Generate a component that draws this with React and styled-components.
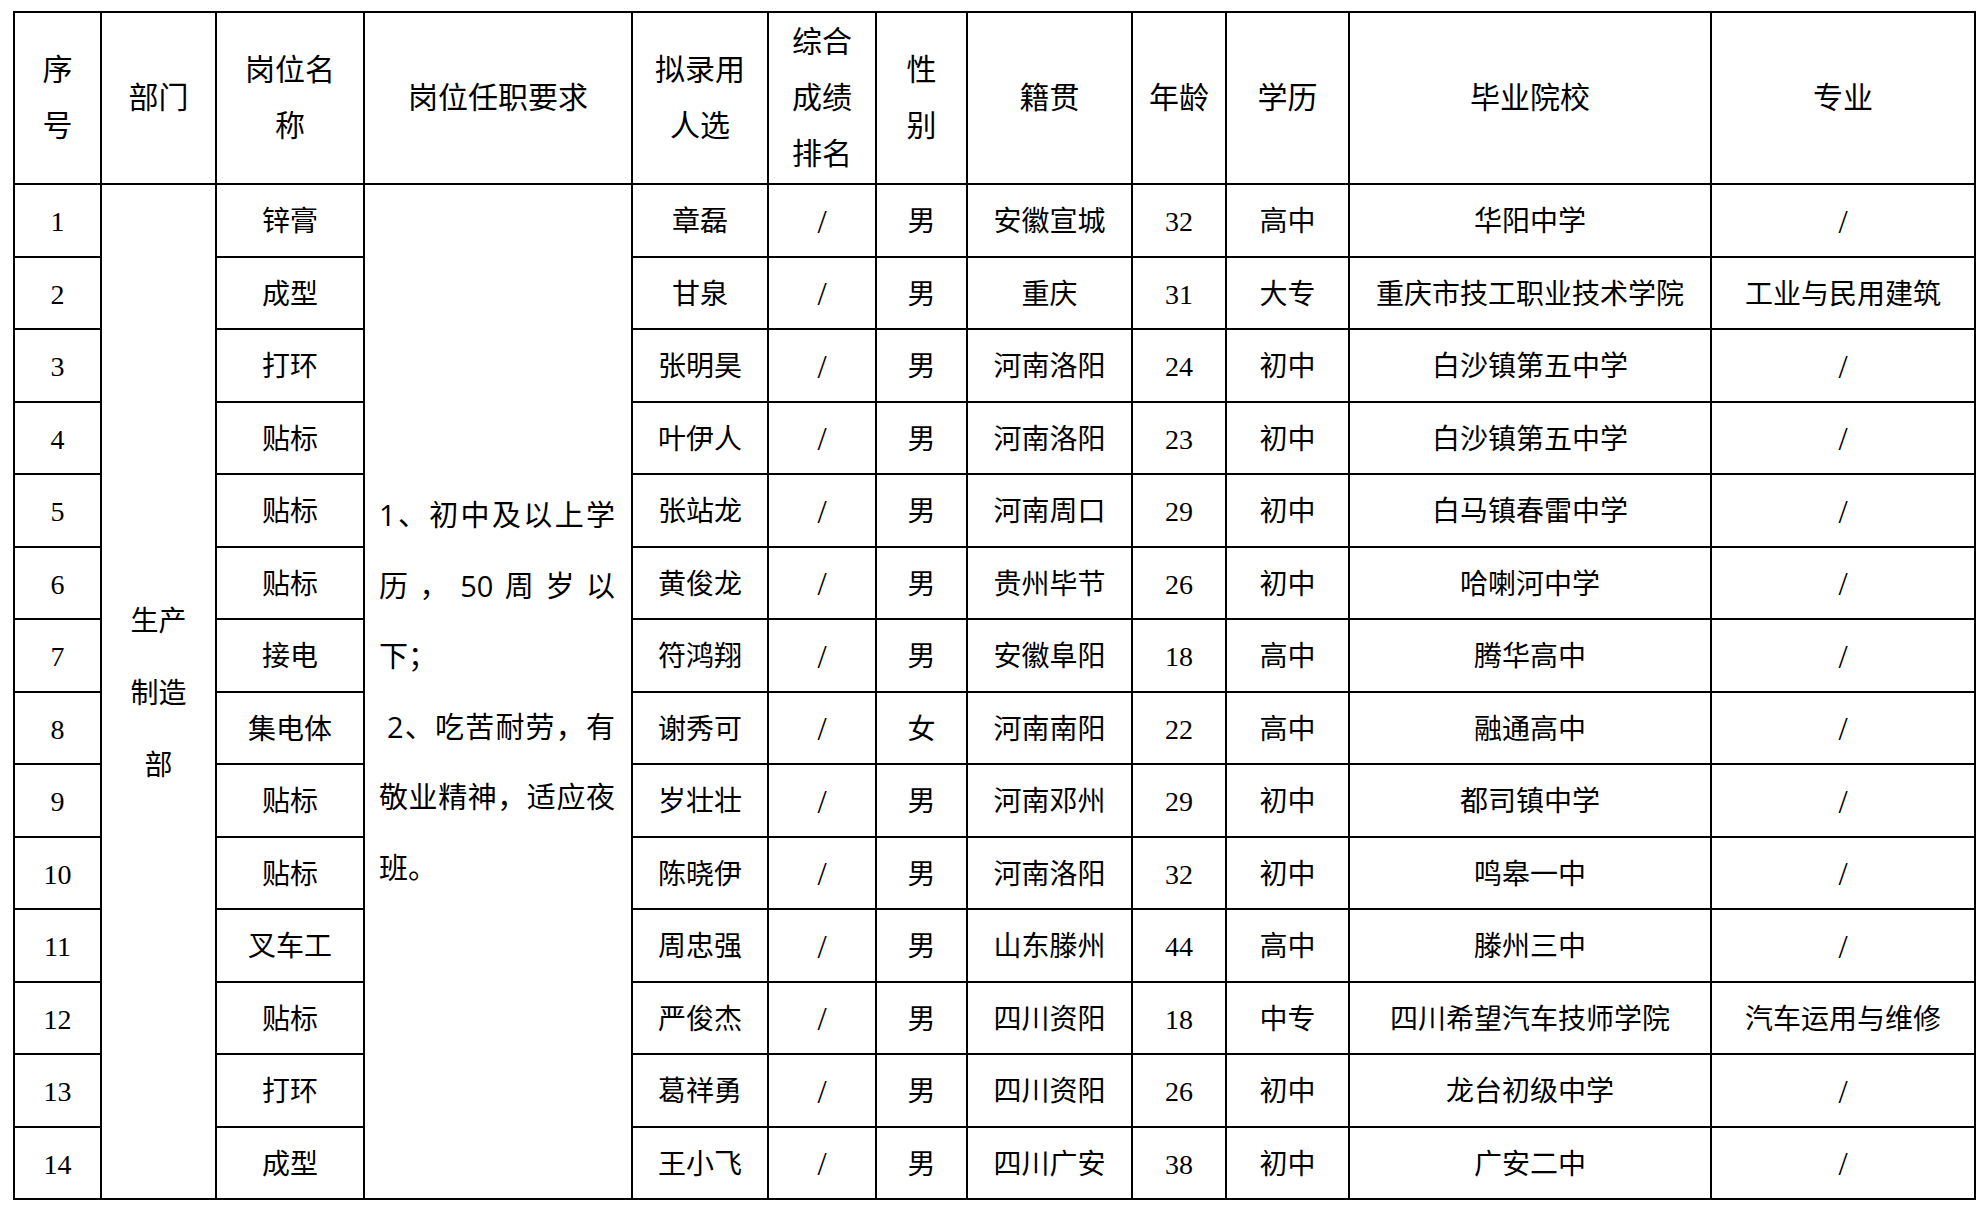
import React from "react";
import styled, { createGlobalStyle } from "styled-components";

const GlobalStyle = createGlobalStyle`
  html, body {
    margin: 0;
    padding: 0;
    background: #fff;
  }
  body {
    font-family: "Liberation Serif", "Noto Sans CJK SC", serif;
    color: #000;
  }
`;

const Page = styled.div`
  padding: 11px 0 0 13px;
`;

const Table = styled.table`
  width: 1961px;
  table-layout: fixed;
  border-collapse: collapse;
  border: 2px solid #000;
`;

const HeadCell = styled.th`
  height: 170px;
  padding: 0;
  border: 2px solid #000;
  font-size: 30px;
  font-weight: 400;
  line-height: 56px;
  text-align: center;
  vertical-align: middle;
  font-family: "Liberation Serif", "Noto Sans CJK SC", serif;
`;

const Cell = styled.td`
  height: 66.5px;
  padding: 4px 0 0;
  border: 2px solid #000;
  font-size: 28px;
  line-height: 1;
  text-align: center;
  vertical-align: middle;
  white-space: nowrap;
`;

const DeptCell = styled(Cell)`
  white-space: normal;
  padding: 4px 22px 0;
  line-height: 72px;
`;

const ReqCell = styled(Cell)`
  white-space: normal;
  padding: 0 16px 0 14px;
  text-align: left;
`;

const ReqLine = styled.div`
  font-family: "Open Sans", "Noto Sans CJK SC", sans-serif;
  font-size: 29px;
  line-height: 70.5px;
  white-space: nowrap;
  text-align: justify;
  text-align-last: ${(p) => (p.$full ? "justify" : "left")};
  padding-left: ${(p) => (p.$indent ? "8px" : "0")};
`;

const Slash = styled.span`
  font-family: "Liberation Serif", serif;
  font-size: 33px;
  font-weight: 300;
`;

const widths = [87, 115, 148, 268, 136, 108, 91, 165, 94, 123, 362, 264];

const headers = [
  ["序", "号"],
  ["部门"],
  ["岗位名", "称"],
  ["岗位任职要求"],
  ["拟录用", "人选"],
  ["综合", "成绩", "排名"],
  ["性", "别"],
  ["籍贯"],
  ["年龄"],
  ["学历"],
  ["毕业院校"],
  ["专业"],
];

const requirement = [
  { text: "1、初中及以上学", full: true },
  { text: "历，50周岁以", full: true },
  { text: "下；" },
  { text: "2、吃苦耐劳，有", full: true, indent: true },
  { text: "敬业精神，适应夜", full: true },
  { text: "班。" },
];

const rows = [
  ["锌膏", "章磊", "男", "安徽宣城", "32", "高中", "华阳中学", "/"],
  ["成型", "甘泉", "男", "重庆", "31", "大专", "重庆市技工职业技术学院", "工业与民用建筑"],
  ["打环", "张明昊", "男", "河南洛阳", "24", "初中", "白沙镇第五中学", "/"],
  ["贴标", "叶伊人", "男", "河南洛阳", "23", "初中", "白沙镇第五中学", "/"],
  ["贴标", "张站龙", "男", "河南周口", "29", "初中", "白马镇春雷中学", "/"],
  ["贴标", "黄俊龙", "男", "贵州毕节", "26", "初中", "哈喇河中学", "/"],
  ["接电", "符鸿翔", "男", "安徽阜阳", "18", "高中", "腾华高中", "/"],
  ["集电体", "谢秀可", "女", "河南南阳", "22", "高中", "融通高中", "/"],
  ["贴标", "岁壮壮", "男", "河南邓州", "29", "初中", "都司镇中学", "/"],
  ["贴标", "陈晓伊", "男", "河南洛阳", "32", "初中", "鸣皋一中", "/"],
  ["叉车工", "周忠强", "男", "山东滕州", "44", "高中", "滕州三中", "/"],
  ["贴标", "严俊杰", "男", "四川资阳", "18", "中专", "四川希望汽车技师学院", "汽车运用与维修"],
  ["打环", "葛祥勇", "男", "四川资阳", "26", "初中", "龙台初级中学", "/"],
  ["成型", "王小飞", "男", "四川广安", "38", "初中", "广安二中", "/"],
];

const show = (v) => (v === "/" ? <Slash>/</Slash> : v);

const App = () => {
  return (
    <Page>
      <GlobalStyle />
      <Table>
        <colgroup>
          {widths.map((w, i) => (
            <col key={i} style={{ width: w }} />
          ))}
        </colgroup>
        <thead>
          <tr>
            {headers.map((lines, i) => (
              <HeadCell key={i}>
                {lines.map((l, j) => (
                  <React.Fragment key={j}>
                    {j > 0 && <br />}
                    {l}
                  </React.Fragment>
                ))}
              </HeadCell>
            ))}
          </tr>
        </thead>
        <tbody>
          {rows.map((r, i) => {
            const [job, name, sex, origin, age, edu, school, major] = r;
            return (
              <tr key={i}>
                <Cell>{i + 1}</Cell>
                {i === 0 && <DeptCell rowSpan={rows.length}>生产制造部</DeptCell>}
                <Cell>{job}</Cell>
                {i === 0 && (
                  <ReqCell rowSpan={rows.length}>
                    {requirement.map((l, j) => (
                      <ReqLine key={j} $full={l.full} $indent={l.indent}>
                        {l.text}
                      </ReqLine>
                    ))}
                  </ReqCell>
                )}
                <Cell>{name}</Cell>
                <Cell>{show("/")}</Cell>
                <Cell>{sex}</Cell>
                <Cell>{origin}</Cell>
                <Cell>{age}</Cell>
                <Cell>{edu}</Cell>
                <Cell>{school}</Cell>
                <Cell>{show(major)}</Cell>
              </tr>
            );
          })}
        </tbody>
      </Table>
    </Page>
  );
};

export default App;
